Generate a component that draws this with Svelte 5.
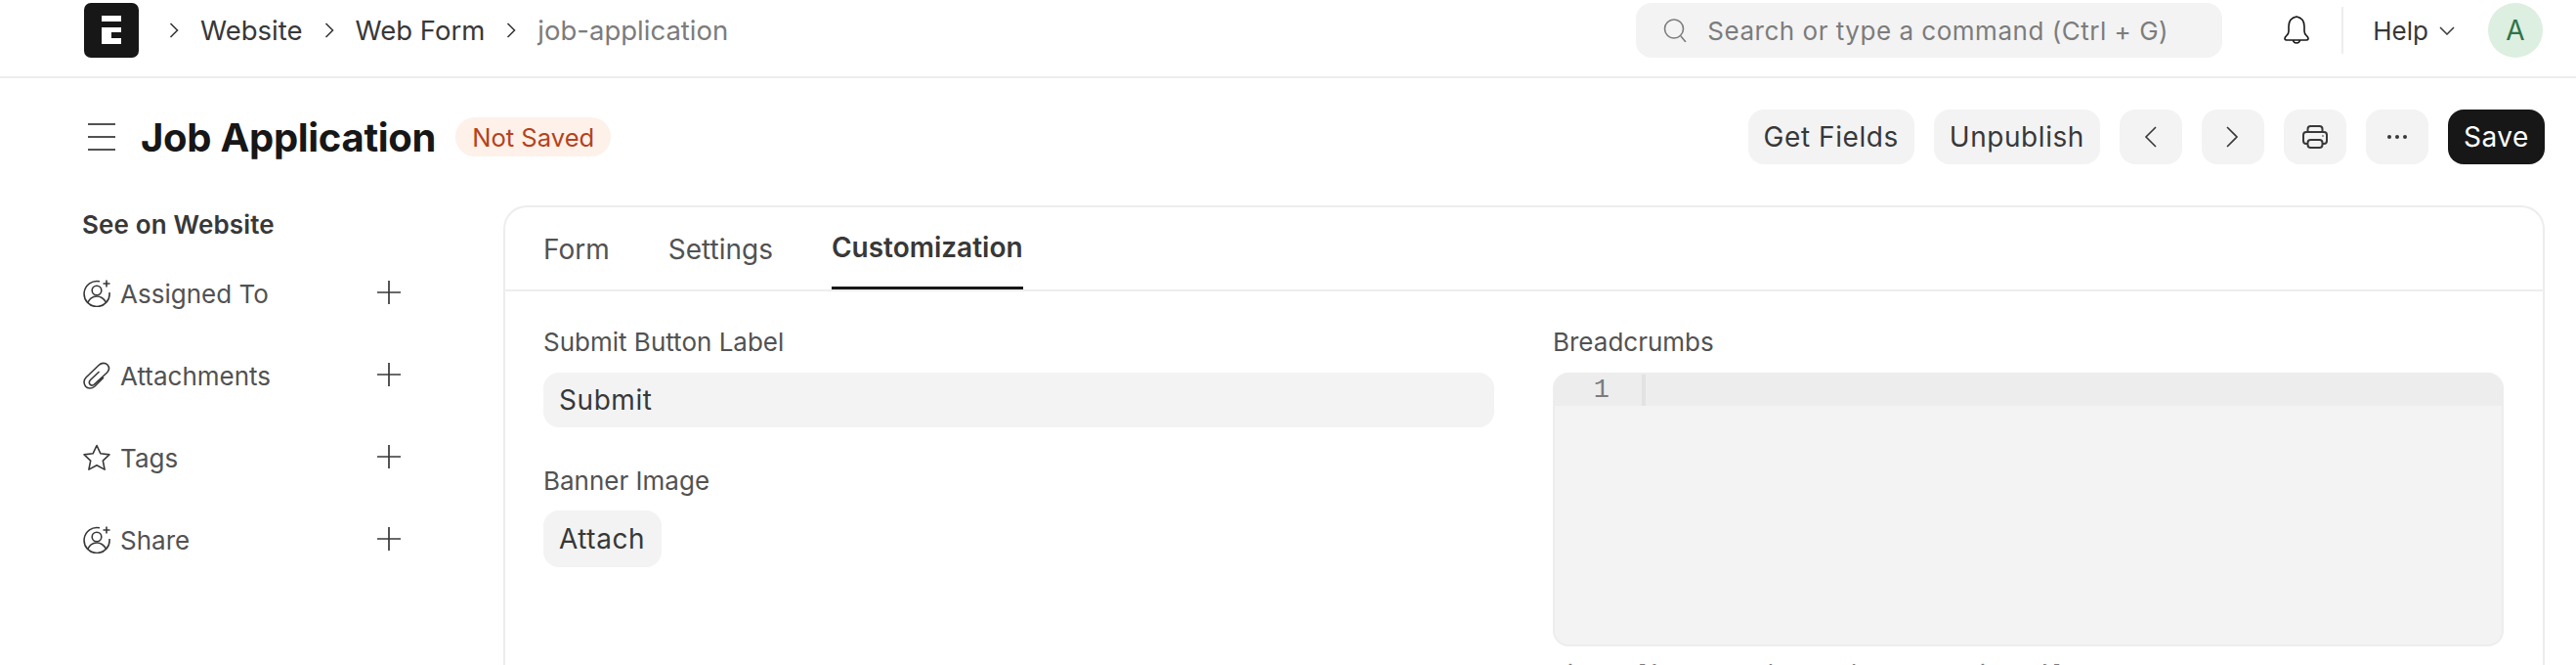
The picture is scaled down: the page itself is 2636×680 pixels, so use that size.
<script>
  const sideItems = [
    { label: 'Assigned To', icon: 'assign' },
    { label: 'Attachments', icon: 'clip' },
    { label: 'Tags', icon: 'star' },
    { label: 'Share', icon: 'assign' }
  ];
  const crumbs = [
    { label: 'Website', current: false },
    { label: 'Web Form', current: false },
    { label: 'job-application', current: true }
  ];
</script>

<div class="page">
  <header class="nav">
    <svg class="logo" width="56" height="56" viewBox="0 0 56 56"><rect width="56" height="56" rx="7" fill="#171717"/><path d="M18 13h20v6H18zM18 25h20v5H28v6h10v6H18z" fill="#fff"/></svg>
    <nav class="crumbs">
      {#each crumbs as c}
        <svg class="chev" width="10" height="16" viewBox="0 0 10 16"><path d="M1.500 1l7 7-7 7" /></svg>
        <span class:cur={c.current}>{c.label}</span>
      {/each}
    </nav>
    <div class="search">
      <svg width="25" height="24" viewBox="0 0 25 24" fill="none" stroke="#7c7c7c" stroke-width="1.6"><circle cx="11" cy="10.500" r="9.500"/><path d="M18 18l5 6"/></svg>
      <span>Search or type a command (Ctrl + G)</span>
    </div>
    <svg class="bell" width="26" height="30" viewBox="0 0 26 30" fill="none" stroke="#171717" stroke-width="1.6" stroke-linejoin="round"><path d="M13 1C8 2 5 5 5 11v5c0 3-2 4-3.500 6C.5 23.500 1 25 3 25h20c2 0 2.500-1.500 1.500-3C23 20 21 19 21 16v-5c0-6-3-9-8-10z"/><path d="M9.500 25c.5 4 6.500 4 7 0"/></svg>
    <div class="vr"></div>
    <div class="help">Help <svg width="16" height="9" viewBox="0 0 16 9" fill="none" stroke="#383838" stroke-width="1.5"><path d="M1 1l7 7 7-7"/></svg></div>
    <div class="avatar">A</div>
  </header>

  <section class="head">
    <svg class="burger" width="28" height="28" viewBox="0 0 28 28" stroke="#525252" stroke-width="2"><path d="M0 1h28M0 14h28M0 27h28"/></svg>
    <h1>Job Application</h1>
    <span class="pill">Not Saved</span>
    <div class="actions">
      <button>Get Fields</button>
      <button>Unpublish</button>
      <button class="sq"><svg width="13" height="22" viewBox="0 0 13 22" fill="none" stroke="#383838" stroke-width="1.6"><path d="M12 1L2 11l10 10"/></svg></button>
      <button class="sq"><svg width="13" height="22" viewBox="0 0 13 22" fill="none" stroke="#383838" stroke-width="1.6"><path d="M1 1l10 10L1 21"/></svg></button>
      <button class="sq"><svg width="26" height="24" viewBox="0 0 26 24" fill="none" stroke="#383838" stroke-width="2"><path d="M5.500 7V4c0-2 1-3 3-3h9c2 0 3 1 3 3v3"/><path d="M5.500 19H4c-2 0-3-1-3-3v-6c0-2 1-3 3-3h18c2 0 3 1 3 3v6c0 2-1 3-3 3h-1.500"/><rect x="5.500" y="15" width="15" height="8" rx="3"/><circle cx="21" cy="11" r="1" fill="#7c7c7c" stroke="none"/></svg></button>
      <button class="sq"><svg width="20" height="4" viewBox="0 0 20 4" fill="#383838"><circle cx="2" cy="2" r="2"/><circle cx="10" cy="2" r="2"/><circle cx="18" cy="2" r="2"/></svg></button>
      <button class="save">Save</button>
    </div>
  </section>

  <div class="body">
    <aside>
      <div class="see">See on Website</div>
      {#each sideItems as item}
        <div class="side-row">
          {#if item.icon === 'assign'}
            <svg class="ic" width="28" height="28" viewBox="0 0 28 28" fill="none" stroke="#383838" stroke-width="1.6"><path d="M17 1.800A13 13 0 1 0 27 13"/><circle cx="14" cy="11" r="4.800"/><path d="M4.500 24c2-5 6-7 9.500-7s7 2 9.500 6"/><path d="M24 .5v7M20.500 4h7"/></svg>
          {:else if item.icon === 'clip'}
            <svg class="ic" width="28" height="28" viewBox="0 0 28 28" fill="none" stroke="#383838" stroke-width="1.6"><path d="M21 16l-9 9c-3.500 3-7.500 2.500-9.500 0s-2-6.500.5-9L16 3.500c3-3 7-2.500 9-.5 2 2.500 2 5.500-.5 8l-13 12c-1.500 1.500-3.500 1.500-4.500 0s-1-3 .5-4.500l9-8.500"/></svg>
          {:else}
            <svg class="ic" width="28" height="28" viewBox="0 0 28 28" fill="none" stroke="#383838" stroke-width="1.6" stroke-linejoin="round"><path d="M14 1.500l3.900 8.300 9 1.100-6.600 6.200 1.800 9L14 21.700l-8.100 4.400 1.800-9-6.600-6.200 9-1.100z"/></svg>
          {/if}
          <span>{item.label}</span>
          <svg class="plus" width="24" height="24" viewBox="0 0 24 24" stroke="#383838" stroke-width="1.7"><path d="M12 0v24M0 12h24"/></svg>
        </div>
      {/each}
    </aside>

    <main class="card">
      <div class="tabs">
        <div class="tab">Form</div>
        <div class="tab">Settings</div>
        <div class="tab active">Customization</div>
      </div>
      <div class="cols">
        <div class="col">
          <div class="lbl">Submit Button Label</div>
          <div class="input">Submit</div>
          <div class="lbl second">Banner Image</div>
          <div class="attach">Attach</div>
        </div>
        <div class="col">
          <div class="lbl">Breadcrumbs</div>
          <div class="editor">
            <div class="line"><span class="num">1</span><span class="cursorbar"></span></div>
          </div>
          <div class="hint">List as [&#123;"label": _("Jobs"), "route":"jobs"&#125;]</div>
        </div>
      </div>
    </main>
  </div>
</div>

<style>
  :global(body) { margin: 0; background: #fff; }
  .page { width: 2636px; height: 680px; overflow: hidden; font-family: Inter, "Liberation Sans", sans-serif; color: #383838; }

  .nav { height: 80px; box-sizing: border-box; border-bottom: 2px solid #ededed; display: flex; align-items: center; padding: 3px 34px 19px 86px; }
  .logo { flex: none; }
  .crumbs { display: flex; align-items: center; gap: 22px; font-size: 27.5px; margin-left: 31px; }
  .chev { fill: none; stroke: #383838; stroke-width: 1.6; }
  .cur { color: #7c7c7c; }
  .search { margin-left: auto; width: 600px; height: 56px; box-sizing: border-box; background: #f3f3f3; border-radius: 16px; display: flex; align-items: center; gap: 20px; padding-left: 28px; color: #7c7c7c; font-size: 26px; letter-spacing: 0.52px; }
  .bell { margin-left: 63px; }
  .vr { width: 2px; height: 48px; background: #ededed; margin-left: 33px; }
  .help { display: flex; align-items: center; gap: 11px; margin-left: 30px; font-size: 26px; }
  .avatar { width: 56px; height: 56px; border-radius: 50%; background: #dcefe0; color: #30734a; display: flex; align-items: center; justify-content: center; font-size: 28px; margin-left: 34px; }

  .head { display: flex; align-items: center; height: 120px; padding: 0 32px 0 90px; }
  .burger { margin-right: 26px; }
  h1 { margin: 0; font-size: 40px; font-weight: 700; color: #171717; letter-spacing: -0.3px; }
  .pill { margin-left: 20px; height: 40px; padding: 0 17px; border-radius: 20px; background: #fdf1e9; color: #b5421c; font-size: 25.6px; display: flex; align-items: center; }
  .actions { margin-left: auto; display: flex; gap: 20px; }
  button { height: 56px; border: 0; border-radius: 16px; background: #f3f3f3; color: #383838; font: inherit; font-size: 28px; letter-spacing: 0.56px; padding: 0 16px; display: flex; align-items: center; justify-content: center; }
  .sq { width: 64px; padding: 0; }
  .save { background: #171717; color: #fff; }

  .body { display: flex; padding: 10px 0 0 85px; }
  aside { width: 430px; flex: none; }
  .see { font-size: 26px; font-weight: 600; letter-spacing: 0.15px; height: 40px; line-height: 40px; margin: 0 0 8px -1px; }
  .side-row { display: flex; align-items: center; height: 84px; width: 325px; font-size: 26px; color: #525252; }
  .ic { margin-right: 10px; flex: none; }
  .plus { margin-left: auto; margin-top: -2px; }

  .card { flex: none; width: 2089px; height: 500px; border: 2px solid #ededed; border-bottom: 0; border-radius: 24px 24px 0 0; box-sizing: border-box; }
  .tabs { display: flex; gap: 60px; padding: 0 39px; height: 86px; box-sizing: border-box; border-bottom: 2px solid #ededed; }
  .tab { font-size: 28px; line-height: 34px; color: #525252; padding-top: 26px; box-sizing: border-box; height: 84px; }
  .tab.active { color: #383838; font-weight: 600; border-bottom: 3px solid #171717; padding-top: 24px; }
  .cols { display: flex; gap: 60px; padding: 38px 0 0 39px; }
  .col { width: 973px; flex: none; }
  .lbl { font-size: 26px; color: #525252; height: 28px; line-height: 28px; margin-bottom: 17px; }
  .second { margin-top: 41px; margin-bottom: 16px; }
  .input { height: 56px; background: #f3f3f3; border-radius: 16px; font-size: 28px; letter-spacing: 0.56px; padding-left: 16px; display: flex; align-items: center; }
  .attach { height: 58px; width: 121px; box-sizing: border-box; background: #f3f3f3; border-radius: 16px; font-size: 28px; letter-spacing: 0.56px; padding-left: 16px; display: flex; align-items: center; }
  .editor { height: 280px; background: #f3f3f3; border: 2px solid #ededed; border-top: 0; border-radius: 16px; overflow: hidden; box-sizing: border-box; }
  .line { height: 34px; margin: 0 -2px; background: #ededed; display: flex; font-family: "Liberation Mono", monospace; font-size: 27px; color: #7c7c7c; }
  .num { width: 58px; text-align: right; line-height: 36px; }
  .cursorbar { width: 4px; height: 32px; margin-left: 33px; margin-top: 2px; background: #e2e2e2; }
  .hint { font-size: 26px; line-height: 34px; color: #7c7c7c; margin-top: 12px; }
</style>
